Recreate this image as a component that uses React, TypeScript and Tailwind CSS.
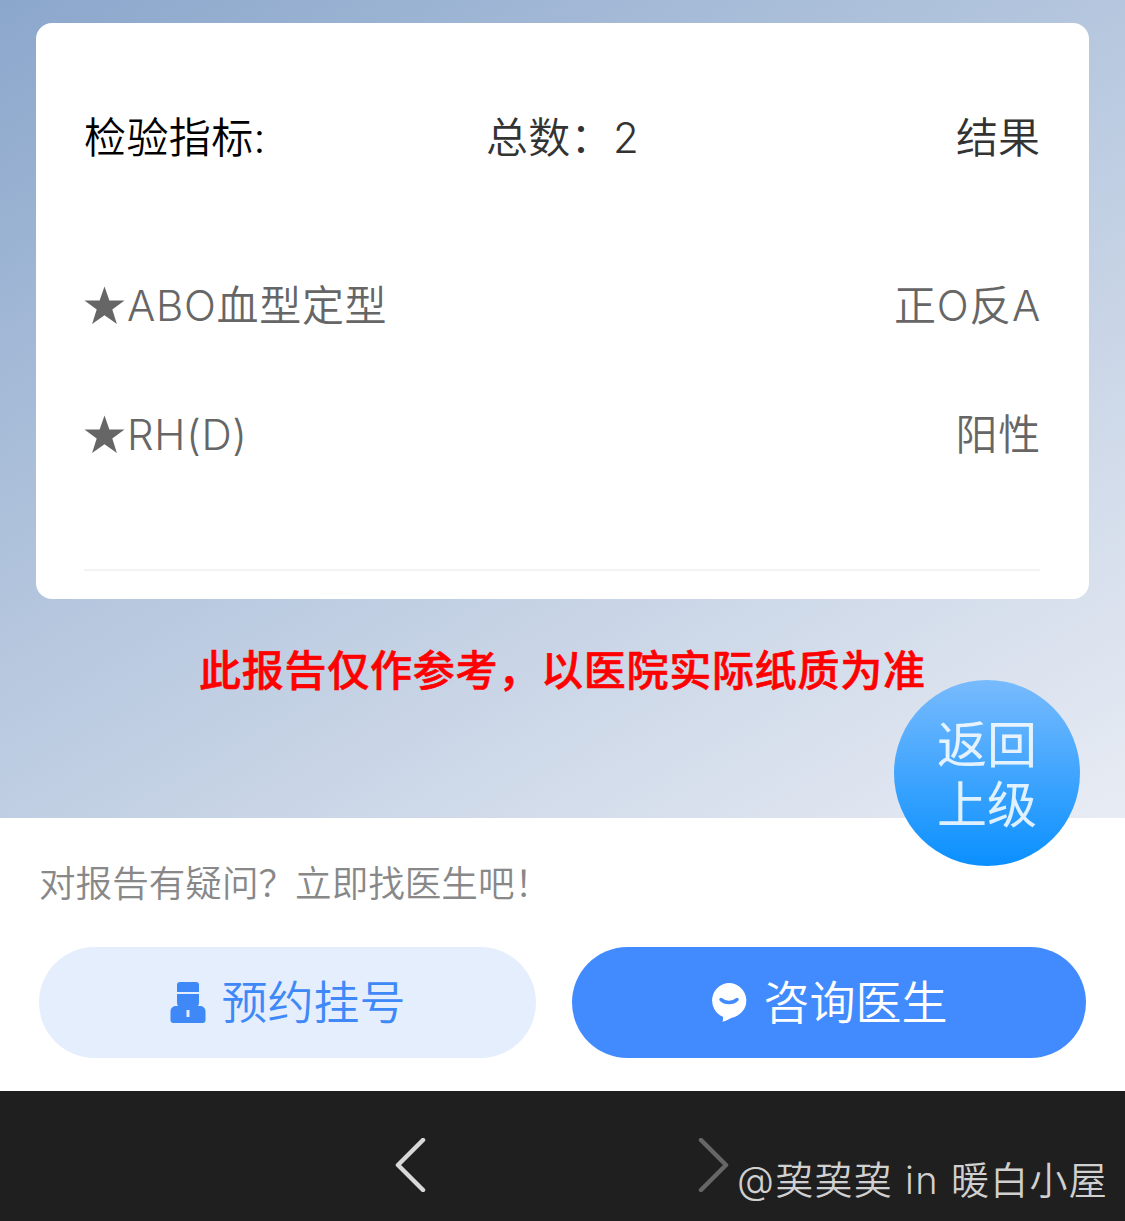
const cjk = { fontFamily: 'Inter, "Noto Sans CJK SC", sans-serif' }

function Row({ label, value }: { label: string; value: string }) {
  return (
    <div className="flex h-[129px] items-center justify-between text-[42px] leading-none font-[350] tracking-[0.7px] text-[#666]">
      <span className="flex items-center gap-[2px]">
        <svg width="41" height="39" viewBox="0 0 41 39" fill="#666">
          <path d="M20.500 0.500 25.400 14.500H40.500L28.300 23.500 32.900 38 20.500 29.200 8.100 38 12.700 23.500 0.500 14.500H15.600z" />
        </svg>
        {label}
      </span>
      <span className="-mr-[1px]">{value}</span>
    </div>
  )
}

export default function App() {
  return (
    <div className="relative h-[1221px] w-[1125px] overflow-hidden bg-white" style={cjk}>
      <section className="h-[818px] bg-[linear-gradient(150deg,#8ba7cc_0%,#b3c5dd_42%,#e8ecf4_100%)] pt-[23px] pr-[36px] pl-[36px]">
        <div className="h-[576px] rounded-[16px] bg-white pr-[49px] pl-[48px]">
          <div className="flex h-[218px] items-center pt-[12px] text-[42px] leading-none font-[350]">
            <span className="w-[402px] tracking-[0.4px] text-black">检验指标:</span>
            <span className="tracking-[0.3px] text-[#333]">总数：2</span>
            <span className="ml-auto text-[#333]">结果</span>
          </div>
          <Row label="ABO血型定型" value="正O反A" />
          <Row label="RH(D)" value="阳性" />
          <div className="mt-[70px] h-[2px] bg-[#f3f3f3]" />
        </div>
        <p className="mt-[51px] text-center text-[42px] leading-none font-medium tracking-[0.75px] text-[#ff0000] [-webkit-text-stroke:0.6px_#ff0000]">
          此报告仅作参考，以医院实际纸质为准
        </p>
      </section>

      <section className="h-[273px] px-[39px]">
        <p className="pt-[48px] text-[36.6px] leading-none font-[350] text-[#888]">对报告有疑问？立即找医生吧！</p>
        <div className="mt-[44px] flex gap-[36px]">
          <button className="flex h-[111px] w-[497px] items-center justify-center gap-[16px] rounded-full bg-[#e4eefd] text-[46px] font-[350] text-[#3f88f8]">
            <svg width="36" height="42" viewBox="0 0 36 42" fill="#3f88f8">
              <path d="M10 1h16a3 3 0 0 1 3 3v7H7V4a3 3 0 0 1 3-3z" />
              <path d="M7 13h22v8c0 1.500-.3 3-1 4h1.500c3.500 0 6 2 6 5.500V39a3 3 0 0 1-3 3H3.500a3 3 0 0 1-3-3v-8.500C.5 27 3 25 6.500 25H8c-.7-1-1-2.500-1-4z" />
              <path fill="#e4eefd" d="M16.500 29h3v7h-3z" />
            </svg>
            预约挂号
          </button>
          <button className="flex h-[111px] w-[514px] items-center justify-center gap-[17px] rounded-full bg-[#428bff] text-[46px] font-[350] text-white">
            <svg width="36" height="40" viewBox="0 0 36 40">
              <path fill="#fff" d="M18 1a17.500 17.500 0 0 1 3 34.700c-3 1.500-6 3-9.500 4 .5-1.500.7-3.200.5-5A17.500 17.500 0 0 1 18 1z" />
              <path fill="none" stroke="#428bff" strokeWidth="3.500" strokeLinecap="round" d="M10 17.500c4 4 12 4 16 0" />
            </svg>
            咨询医生
          </button>
        </div>
      </section>

      <footer className="h-[130px] bg-[#1f1f1f]">
        <div className="flex h-full items-center gap-[270px] pt-[17px] pl-[395px]">
          <svg width="32" height="54" viewBox="0 0 32 54" fill="none" stroke="#d8d8d8" strokeWidth="4.500" strokeLinecap="round" strokeLinejoin="round">
            <path d="M28 2 3 27l25 25" />
          </svg>
          <svg width="32" height="54" viewBox="0 0 32 54" fill="none" stroke="#666" strokeWidth="4.500" strokeLinecap="round" strokeLinejoin="round">
            <path d="m4 2 25 25L4 52" />
          </svg>
        </div>
      </footer>

      <div className="absolute top-[680px] left-[894px] flex h-[186px] w-[186px] flex-col items-center justify-center rounded-full bg-[linear-gradient(180deg,#78bbfd_0%,#0a90ff_100%)] pt-[4px] text-[50px] leading-[60px] text-white/85">
        <span>返回</span>
        <span>上级</span>
      </div>

      <span className="absolute top-[1157px] left-[737px] text-[38px] leading-[46px] font-[350] tracking-[1.3px] text-[#d0d0d0]">
        @巭巭巭 in 暖白小屋
      </span>
    </div>
  )
}
